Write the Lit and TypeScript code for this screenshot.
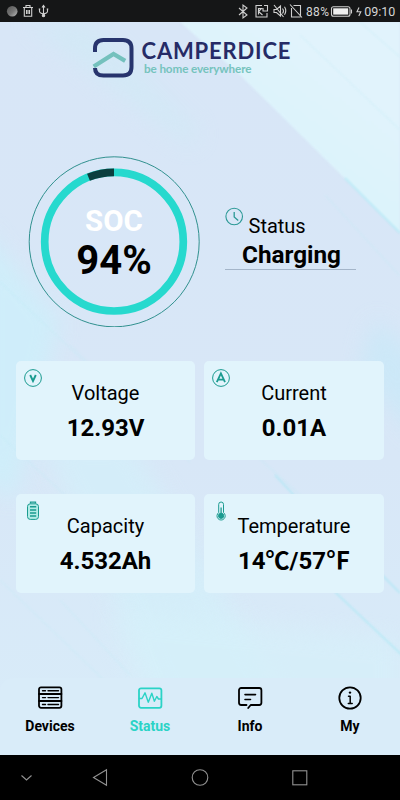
import { LitElement, html, svg, css } from "lit";
import { customElement } from "lit/decorators.js";
import { classMap } from "lit/directives/class-map.js";

const voltIcon = svg`<circle cx="10" cy="10" r="8.4"/><path d="M7.2 7 10 13 12.8 7" stroke-width="1.9"/>`;
const ampIcon = svg`<circle cx="10" cy="10" r="8.4"/><path d="M5.8 14.2 9.9 5.3 14 14.2M7.4 11.7h5" stroke-width="1.8"/>`;
const batteryIcon = svg`<rect x="4.5" y="2.8" width="11" height="15.6" rx="2.8" fill="#b2ece7"/><path d="M7.5 2.4V1.2h5v1.2" stroke-width="1.3"/><path d="M7 5.8h6.2M7 8.9h6.2M7 12h6.2M7 15.1h6.2" stroke-width="1.5"/>`;
const thermoIcon = svg`<path d="M7.7 11.6V3.4a2.4 2.4 0 0 1 4.8 0v8.2a4.1 4.1 0 1 1-4.8 0Z"/><circle cx="10.1" cy="14.8" r="2.6" fill="#1a9b90"/><path d="M10.1 6.5v7" stroke-width="1.3"/>`;

const cards = [
  { label: "Voltage", value: "12.93V", icon: voltIcon },
  { label: "Current", value: "0.01A", icon: ampIcon },
  { label: "Capacity", value: "4.532Ah", icon: batteryIcon },
  { label: "Temperature", value: "14℃/57℉", icon: thermoIcon },
];

const tabs = [
  { label: "Devices", active: false, icon: svg`<rect x="2" y="2.3" width="22.4" height="20.5" rx="2"/><path d="M2 9h22.4M2 16h22.4" /><path d="M5.5 5.8h3M11 5.8h10.5M5.5 12.6h3M11 12.6h10.5M5.5 19.5h3M11 19.5h10.5" stroke-width="1.4"/>` },
  { label: "Status", active: true, icon: svg`<rect x="2" y="3.3" width="22.4" height="19.5" rx="2"/><path d="M2.400 13.500h2.600l3-5.700 3.300 9.400 3.500-9 2.600 8 2.400-4.700 1.700 2.500h2.900" stroke-width="1.4"/>` },
  { label: "Info", active: false, icon: svg`<path d="M9.500 20H4.200A2.200 2.200 0 0 1 2 17.800V5.200A2.200 2.200 0 0 1 4.200 3h18a2.200 2.200 0 0 1 2.200 2.200v12.600a2.200 2.200 0 0 1-2.200 2.200h-8.500l-2.500 3"/><path d="M8 9.600h10.500M8 14.500h5.500" stroke-width="1.6"/>` },
  { label: "My", active: false, icon: svg`<circle cx="13" cy="13" r="10.700"/><path d="M11.500 11.200h1.700v7.300M11.300 18.600h3.900" stroke-width="1.500"/><circle cx="13" cy="7.600" r="1.200" fill="currentColor" stroke="none"/>` },
];

@customElement("metric-card")
class MetricCard extends LitElement {
  static properties = { item: { attribute: false } };
  declare item: (typeof cards)[number];

  static styles = css`
    :host { height: 99px; border-radius: 5px; background: #e1f4fc; display: grid; }
    .icon { grid-area: 1 / 1; margin: 7px 0 0 7px; width: 20px; height: 20px; fill: none; stroke: #1a9b90; stroke-width: 1; }
    .body { grid-area: 1 / 1; display: flex; flex-direction: column; align-items: center; padding-top: 19.5px; }
    .label { font-size: 20px; line-height: 24px; }
    .value { font-size: 24px; line-height: 28px; margin-top: 9.500px; font-weight: 700; }
  `;

  render() {
    return html`<svg class="icon" viewBox="0 0 20 20">${this.item.icon}</svg>
      <div class="body"><span class="label">${this.item.label}</span><span class="value">${this.item.value}</span></div>`;
  }
}

@customElement("app-root")
class AppRoot extends LitElement {
  static styles = css`
    :host { display: flex; flex-direction: column; width: 400px; height: 800px; overflow: hidden; font-family: Roboto, "Noto Sans CJK SC", sans-serif; color: #000; }
    .statusbar { height: 22px; flex: none; background: #151617; }
    .statusbar svg { display: block; }
    .screen { position: relative; height: 733px; flex: none; display: flex; flex-direction: column; background: #d8e6f7; }
    .backdrop { position: absolute; inset: 0; }
    .content { position: relative; flex: 1; display: flex; flex-direction: column; }
    .brand { display: block; height: 70px; }
    .overview { display: flex; margin-top: 63px; height: 206px; flex: none; }
    .gauge { width: 172px; height: 172px; margin-left: 28px; display: grid; flex: none; }
    .gauge svg, .reading { grid-area: 1 / 1; }
    .reading { display: flex; flex-direction: column; align-items: center; padding-top: 49px; font-weight: 700; }
    .soc { font-size: 29.5px; line-height: 34px; color: #fff; }
    .percent { font-size: 40px; line-height: 44px; margin-top: 1px; }
    .state { width: 131px; height: 77px; margin: 37px 0 0 25px; display: grid; border-bottom: 1px solid #a4b5c9; }
    .clock { grid-area: 1 / 1; margin-top: 14px; }
    .state-text { grid-area: 1 / 1; display: flex; flex-direction: column; padding-top: 22px; }
    .state-label { font-size: 20px; line-height: 24px; margin-left: 23.500px; }
    .state-value { font-size: 24.300px; line-height: 28px; margin: 3px 0 0 17px; font-weight: 700; }
    .cards { display: grid; grid-template-columns: 179px 180px; gap: 34px 9px; margin-left: 16px; }
    .tabs { margin-top: auto; height: 77px; flex: none; display: grid; grid-template-columns: repeat(4, 1fr); background: #d9ecf9; border-radius: 14px 0 0 0; }
    .tab { display: flex; flex-direction: column; align-items: center; padding-top: 7px; }
    .tab svg { fill: none; stroke: currentColor; stroke-width: 1.8; stroke-linecap: round; stroke-linejoin: round; }
    .tab span { font-size: 14px; line-height: 18px; margin-top: 6px; font-weight: 700; }
    .tab.active { color: #2bd3c6; }
    .system { height: 45px; flex: none; background: #000; }
  `;

  render() {
    return html`
      <div class="statusbar">
        <svg width="400" height="22" fill="none" stroke="#d0d0d0" stroke-width="1.1">
          <defs><linearGradient id="ball" x1="0" y1="0" x2="1" y2="1"><stop offset="0" stop-color="#555"/><stop offset=".55" stop-color="#777"/><stop offset="1" stop-color="#bbb"/></linearGradient></defs>
          <circle cx="12.200" cy="11.200" r="5.300" fill="url(#ball)" stroke="none"/>
          <path d="M23 7.500h10M26 7V5.500h4V7M24.300 8v8.300h7.400V8M26.500 10v4M28 10v4M29.500 10v4"/>
          <path d="M43.500 6v9.500M39.500 9v2.300q0 2 4 2.500 4-.5 4-2.500V9M42 7.500l1.500-2 1.500 2"/><circle cx="43.500" cy="15.500" r="1.200" fill="#d0d0d0"/><path d="M38.700 9h1.600M46.700 9h1.600"/>
          <path d="M239 8l8 7-4 3V5l4 3-8 7"/>
          <path d="M262 5.500h-6v11.500h11v-4M258.500 14.500v-6h3l-3 3 4 3.500M264 5.500h3.500v5.500H263V8"/>
          <path d="M274 9.500h2.500l4-3.500v10l-4-3.500H274ZM274 5l9.500 12M282.500 8.500q2 2.500 0 5M284.500 6.800q2.500 4 0 8"/>
          <path d="M293.500 5.500h7v10M300.500 17h-9V8M290 4.500l12 13"/>
          <text x="306" y="16.300" font-family="Roboto" font-size="12" stroke="none" fill="#d5d5d5" textLength="23">88%</text>
          <rect x="331.500" y="6.700" width="18.500" height="9.500" rx="2"/><rect x="333.200" y="8.300" width="15" height="6.300" fill="#eee" stroke="none"/><path d="M351.500 9.500v4"/>
          <path d="M359 7.500l-2 4.300h3.800L358.800 16"/>
          <text x="364.300" y="16.300" font-family="Roboto" font-size="12.500" stroke="none" fill="#d5d5d5" textLength="31">09:10</text>
        </svg>
      </div>
      <div class="screen">
        <svg class="backdrop" width="400" height="733" viewBox="0 22 400 733" preserveAspectRatio="none">
          <defs>
            <linearGradient id="base" x1="0" y1="0" x2="0" y2="1"><stop offset="0" stop-color="#d8e6f7"/><stop offset=".6" stop-color="#d8e7f7"/><stop offset="1" stop-color="#d8ecf9"/></linearGradient>
            <linearGradient id="corner" gradientUnits="userSpaceOnUse" x1="290" y1="160" x2="350" y2="80"><stop offset="0" stop-color="#dbf3fb"/><stop offset="1" stop-color="#e1f3fc"/></linearGradient>
            <filter id="soft" x="-30%" y="-30%" width="160%" height="160%" color-interpolation-filters="sRGB"><feGaussianBlur stdDeviation="11"/></filter>
            <filter id="edge" color-interpolation-filters="sRGB"><feGaussianBlur stdDeviation="1"/></filter>
          </defs>
          <rect y="22" width="400" height="733" fill="url(#base)"/>
          <path d="M25 22h65l110 110-10 15Z" fill="#cbedf5" opacity=".4" filter="url(#soft)"/>
          <path d="M-20 225 60 320 15 500-20 480Z" fill="#ccf0fb" opacity=".75" filter="url(#soft)"/>
          <path d="M40 440h90L320 755H190Z" fill="#d3f0fa" opacity=".7" filter="url(#soft)"/>
          <path d="M110 610 400 640v80H150Z" fill="#d6f1fa" opacity=".6" filter="url(#soft)"/>
          <path d="M375 320l45 40v80l-60-70Z" fill="#c7e9f8" opacity=".7" filter="url(#soft)"/>
          <path d="M180 22H400V233L240 75Z" fill="url(#corner)" filter="url(#edge)"/>
          <g fill="none" stroke="#bdeaf4" stroke-width="1" opacity=".55" filter="url(#edge)">
            <path d="M300 35 400 130M360 22l40 35M0 282l190 180M70 345l90 90M0 435l65 60M250 450l100 90"/>
            <path d="M325 195 400 276M0 580 112 688M60 600l70 75"/>
          </g>
          <g fill="none" stroke="#a5e8f4" stroke-width="1.500" opacity=".75" filter="url(#edge)">
            <path d="M345 178 400 233M275 475l30 32M380 573l20 20M335 592l68 64"/>
          </g>
        </svg>
        <div class="content">
          <svg class="brand" width="400" height="70" viewBox="0 22 400 70">
            <path d="M95 52V48.500Q95 40 103.500 40H123q8.500 0 8.500 8.500v18.500q0 8.500-8.500 8.500h-19.500Q95 75.500 95 68" fill="none" stroke="#27346d" stroke-width="4"/>
            <path d="M93.700 66.500 113.500 54 125.200 60.800" fill="none" stroke="#74c1bd" stroke-width="4.300"/>
            <text x="141.500" y="59" font-family="Lato" font-weight="700" font-size="22" fill="#262b66" textLength="149">CAMPERDICE</text>
            <text x="144" y="73.200" font-family="Lato" font-weight="700" font-size="11.700" fill="#75c3bd" textLength="107.500">be home everywhere</text>
          </svg>
          <div class="overview">
            <div class="gauge">
              <svg width="172" height="172" viewBox="0 0 172 172" fill="none">
                <circle cx="86.200" cy="86.800" r="85" stroke="#31918f"/>
                <circle cx="86" cy="86.700" r="69.300" stroke="#26d9ce" stroke-width="7.700"/>
                <circle cx="86" cy="86.700" r="69.300" stroke="#0b3e3e" stroke-width="7.700" pathLength="100" stroke-dasharray="6 94" transform="rotate(-111.600 86 86.700)"/>
              </svg>
              <div class="reading"><span class="soc">SOC</span><span class="percent">94%</span></div>
            </div>
            <div class="state">
              <svg class="clock" width="20" height="20" fill="none" stroke="#2c9996"><circle cx="9.200" cy="10.500" r="8.300" stroke-width="1.100"/><path d="M9.200 6v5l4 3.500" stroke-width="1.300"/></svg>
              <div class="state-text"><span class="state-label">Status</span><span class="state-value">Charging</span></div>
            </div>
          </div>
          <div class="cards">${cards.map((c) => html`<metric-card .item=${c}></metric-card>`)}</div>
          <nav class="tabs">
            ${tabs.map((t) => html`<div class=${classMap({ tab: true, active: t.active })}><svg width="26" height="26">${t.icon}</svg><span>${t.label}</span></div>`)}
          </nav>
        </div>
      </div>
      <div class="system">
        <svg width="400" height="45" fill="none" stroke="#929292" stroke-width="1.100">
          <path d="M21.500 20.500l5 4.500 5-4.500"/><path d="M106.500 14.800v15.500L93.500 22.500Z"/><circle cx="200" cy="22.500" r="7.800"/><rect x="292.800" y="15.800" width="14" height="14"/>
        </svg>
      </div>`;
  }
}
